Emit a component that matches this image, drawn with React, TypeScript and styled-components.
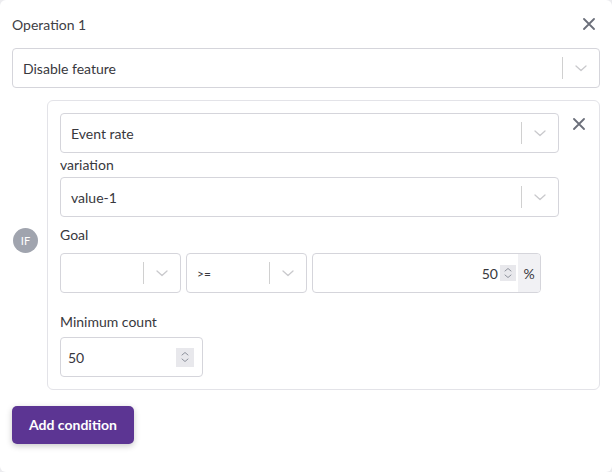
import React from "react";
import styled, { createGlobalStyle } from "styled-components";

const Global = createGlobalStyle`
  html, body { margin: 0; padding: 0; background: #ececef; }
  body { font-family: Lato, "Noto Sans", sans-serif; color: #38383d; }
  * { box-sizing: border-box; }
`;

const Card = styled.div`
  width: 612px;
  height: 472px;
  background: #fff;
  border-radius: 6px;
  padding: 0 12px 12px 12px;
  display: flex;
  flex-direction: column;
`;

const Header = styled.div`
  height: 48px;
  display: flex;
  align-items: center;
  justify-content: space-between;
`;

const Title = styled.div`
  font-size: 14px;
  color: #404045;
  padding-top: 1px;
`;

const CloseBtn = styled.button`
  border: none;
  background: transparent;
  padding: 0;
  width: 22px;
  height: 22px;
  display: flex;
  align-items: center;
  justify-content: center;
  cursor: pointer;
  color: #6b6f7a;
`;

const SelectBox = styled.div<{ $w?: string }>`
  height: 40px;
  width: ${(p) => p.$w || "100%"};
  border: 1px solid #d5d5db;
  border-radius: 4px;
  background: #fff;
  display: flex;
  align-items: center;
`;

const SelectValue = styled.div<{ $small?: boolean }>`
  flex: 1;
  padding-left: 10px;
  font-size: ${(p) => (p.$small ? "12px" : "14px")};
  color: #38383d;
  white-space: nowrap;
  overflow: hidden;
`;

const Separator = styled.span`
  width: 1px;
  align-self: stretch;
  margin: 8px 0;
  background: #d0d0d0;
`;

const Indicator = styled.span`
  width: 36px;
  display: flex;
  align-items: center;
  justify-content: center;
  color: #c9c9cc;
`;

const ConditionRow = styled.div`
  display: flex;
  align-items: center;
  margin-top: 12px;
`;

const IfCol = styled.div`
  width: 35px;
  padding-left: 1px;
  padding-bottom: 9px;
  display: flex;
`;

const IfBadge = styled.div`
  width: 25px;
  height: 25px;
  border-radius: 50%;
  background: #a0a4ae;
  color: #fff;
  font-size: 11px;
  display: flex;
  align-items: center;
  justify-content: center;
`;

const ConditionBox = styled.div`
  flex: 1;
  border: 1px solid #e3e3e8;
  border-radius: 6px;
  padding: 12px 0 12px 12px;
  display: flex;
  align-items: flex-start;
`;

const Fields = styled.div`
  flex: 1;
  display: flex;
  flex-direction: column;
`;

const RemoveCol = styled.div`
  width: 40px;
  display: flex;
  justify-content: center;
`;

const Label = styled.div<{ $mt: number; $mb: number }>`
  font-size: 14px;
  line-height: 20px;
  color: #38383d;
  margin-top: ${(p) => p.$mt}px;
  margin-bottom: ${(p) => p.$mb}px;
`;

const GoalRow = styled.div`
  display: grid;
  grid-template-columns: 121px 121px 229px;
  gap: 5px;
`;

const NumberBox = styled.div<{ $w?: string }>`
  height: 40px;
  width: ${(p) => p.$w || "100%"};
  border: 1px solid #d5d5db;
  border-radius: 4px;
  display: flex;
  align-items: center;
  overflow: hidden;
  background: #fff;
`;

const NumberValue = styled.div<{ $align: "left" | "right" }>`
  flex: 1;
  font-size: 14px;
  color: #38383d;
  text-align: ${(p) => p.$align};
  padding: 0 2px 0 7px;
`;

const Spinner = styled.span<{ $w: number; $h: number; $mr: number }>`
  width: ${(p) => p.$w}px;
  height: ${(p) => p.$h}px;
  margin-right: ${(p) => p.$mr}px;
  background: #e8e8ec;
  display: flex;
  align-items: center;
  justify-content: center;
  color: #8e929c;
`;

const Addon = styled.span`
  align-self: stretch;
  width: 22px;
  background: #f1f1f4;
  display: flex;
  align-items: center;
  justify-content: center;
  font-size: 14px;
  color: #38383d;
`;

const PrimaryButton = styled.button`
  margin-top: 16px;
  align-self: flex-start;
  height: 38px;
  padding: 0 17px 1px;
  border: none;
  border-radius: 5px;
  background: #5c3593;
  color: #fff;
  font-family: Lato, "Noto Sans", sans-serif;
  font-weight: 700;
  font-size: 14px;
  box-shadow: 0 2px 6px rgba(0, 0, 0, 0.22);
  cursor: pointer;
`;

const XIcon = () => (
  <svg width="12" height="12" viewBox="0 0 12 12" fill="none">
    <path d="M1 1L11 11M11 1L1 11" stroke="currentColor" strokeWidth="1.8" strokeLinecap="round" />
  </svg>
);

const Chevron = () => (
  <svg width="12" height="7" viewBox="0 0 12 7" fill="none">
    <path d="M1 1L6 5.5L11 1" stroke="currentColor" strokeWidth="1.3" strokeLinecap="round" strokeLinejoin="round" />
  </svg>
);

const SpinIcon = () => (
  <svg width="8" height="12" viewBox="0 0 8 12" fill="none">
    <path d="M1 4L4 1.5L7 4M1 8L4 10.5L7 8" stroke="currentColor" strokeWidth="1" strokeLinecap="round" strokeLinejoin="round" />
  </svg>
);

const Select = ({ value, w, small }: { value: string; w?: string; small?: boolean }) => (
  <SelectBox $w={w}>
    <SelectValue $small={small}>{value}</SelectValue>
    <Separator />
    <Indicator>
      <Chevron />
    </Indicator>
  </SelectBox>
);

export default function App() {
  return (
    <>
      <Global />
      <Card>
        <Header>
          <Title>Operation 1</Title>
          <CloseBtn aria-label="close">
            <XIcon />
          </CloseBtn>
        </Header>
        <Select value="Disable feature" />
        <ConditionRow>
          <IfCol>
            <IfBadge>IF</IfBadge>
          </IfCol>
          <ConditionBox>
            <Fields>
              <Select value="Event rate" />
              <Label $mt={2} $mb={2}>variation</Label>
              <Select value="value-1" />
              <Label $mt={8} $mb={8}>Goal</Label>
              <GoalRow>
                <Select value="" />
                <Select value=">=" small />
                <NumberBox>
                  <NumberValue $align="right">50</NumberValue>
                  <Spinner $w={16} $h={16} $mr={2}>
                    <SpinIcon />
                  </Spinner>
                  <Addon>%</Addon>
                </NumberBox>
              </GoalRow>
              <Label $mt={19} $mb={5}>Minimum count</Label>
              <NumberBox $w="143px">
                <NumberValue $align="left">50</NumberValue>
                <Spinner $w={18} $h={19} $mr={8}>
                  <SpinIcon />
                </Spinner>
              </NumberBox>
            </Fields>
            <RemoveCol>
              <CloseBtn aria-label="remove condition">
                <XIcon />
              </CloseBtn>
            </RemoveCol>
          </ConditionBox>
        </ConditionRow>
        <PrimaryButton>Add condition</PrimaryButton>
      </Card>
    </>
  );
}
